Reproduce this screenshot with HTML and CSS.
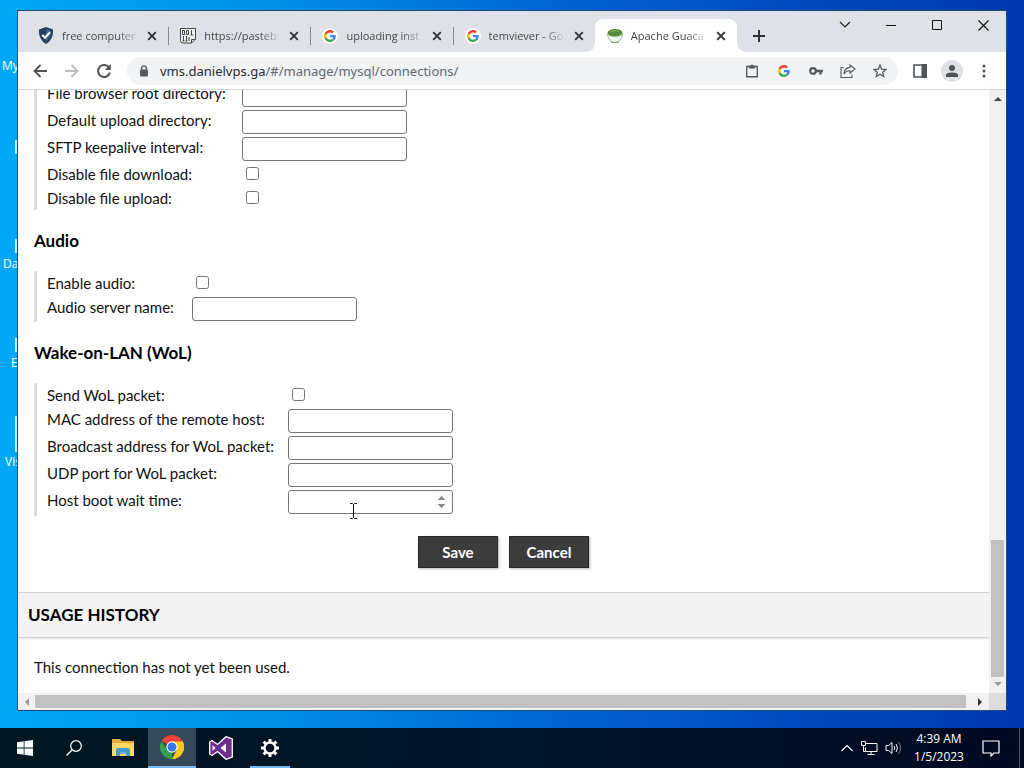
FILE: index.html
```html
<!DOCTYPE html>
<html lang="en">
<head>
<meta charset="utf-8">
<title>Apache Guacamole</title>
<link rel="stylesheet" href="styles.css">
</head>
<body>
<svg class="defs" width="0" height="0" aria-hidden="true">
  <symbol id="x" viewBox="0 0 10 10"><path d="M1.2 1.2 8.8 8.8M8.8 1.2 1.2 8.8" stroke="#303337" stroke-width="1.9" fill="none"/></symbol>
  <symbol id="google" viewBox="0 0 48 48">
    <path fill="#ea4335" d="M24 9.5c3.54 0 6.71 1.22 9.21 3.6l6.85-6.85C35.9 2.38 30.47 0 24 0 14.62 0 6.51 5.38 2.56 13.22l7.98 6.19C12.43 13.72 17.74 9.5 24 9.5z"/>
    <path fill="#4285f4" d="M46.98 24.55c0-1.57-.15-3.09-.38-4.55H24v9.02h12.94c-.58 2.96-2.26 5.48-4.78 7.18l7.73 6c4.51-4.18 7.09-10.36 7.09-17.65z"/>
    <path fill="#fbbc05" d="M10.53 28.59c-.48-1.45-.76-2.99-.76-4.59s.27-3.14.76-4.59l-7.98-6.19C.92 16.46 0 20.12 0 24c0 3.88.92 7.54 2.56 10.78l7.97-6.19z"/>
    <path fill="#34a853" d="M24 48c6.48 0 11.93-2.13 15.89-5.81l-7.73-6c-2.15 1.45-4.92 2.3-8.16 2.3-6.26 0-11.57-4.22-13.47-9.91l-7.98 6.19C6.51 42.62 14.62 48 24 48z"/>
  </symbol>
</svg>
<div class="desktop">
  <ul class="shortcuts">
    <li class="pc">My PC</li><li class="data">Data</li><li class="edge">Edge</li><li class="vis">Visual</li>
  </ul>
  <div class="window">
    <header class="tabstrip">
      <nav class="tabs">
        <div class="tab">
          <svg width="16" height="17" viewBox="0 0 16 17"><path d="M8 0 15 2.5C15.5 9 13 14 8 17 3 14 .5 9 1 2.5z" fill="#24425f"/><path d="M8 2 13 4C13 9 11 12 8 14.500z" fill="#3e668b"/><path d="M4.300 8 7 10.700 12 5.300" fill="none" stroke="#fff" stroke-width="2"/></svg>
          <span class="title">free computer</span>
          <button class="close" aria-label="Close tab"><svg width="10" height="10"><use href="#x"/></svg></button>
        </div>
        <div class="tab">
          <svg width="16" height="17" viewBox="0 0 16 17" fill="none" stroke="#333"><path d="M.5 1.500H15.500V12L11.500 16H3Q.5 16 .5 13.500z" fill="#f4f4f4" stroke-width=".9"/><path d="M11.500 16V12.500H15.500M2.500 3.500h2v4h-2zM6.500 3.500h2v4h-2zM11.500 3v5M10.500 8h3M3.500 9v5M6.500 9v5M2.500 14h2M5.500 14h2M9 10v4" stroke-width=".9"/></svg>
          <span class="title">https://pasteb</span>
          <button class="close" aria-label="Close tab"><svg width="10" height="10"><use href="#x"/></svg></button>
        </div>
        <div class="tab">
          <span class="disc"><svg width="12" height="12"><use href="#google"/></svg></span>
          <span class="title">uploading inst</span>
          <button class="close" aria-label="Close tab"><svg width="10" height="10"><use href="#x"/></svg></button>
        </div>
        <div class="tab last">
          <span class="disc"><svg width="12" height="12"><use href="#google"/></svg></span>
          <span class="title">temviever - Go</span>
          <button class="close" aria-label="Close tab"><svg width="10" height="10"><use href="#x"/></svg></button>
        </div>
        <div class="tab active">
          <svg width="16" height="16" viewBox="0 0 16 16"><path d="M.5 5.500C1 11 3.500 14.500 8 14.500S15 11 15.500 5.500z" fill="#f0f3ee" stroke="#a9b4a9"/><path d="M4 14Q8 15.500 12 14" fill="none" stroke="#6f9a65"/><ellipse cx="8" cy="5" rx="7.500" ry="3.800" fill="#659f42"/><path d="M1 4C4 0 13 0 15 4L13 6Q8 9 2 7z" fill="#4f8b37"/><path d="M3 4q4-2 9-1" stroke="#8dbb5c" fill="none"/></svg>
          <span class="title">Apache Guaca</span>
          <button class="close" aria-label="Close tab"><svg width="10" height="10"><use href="#x"/></svg></button>
        </div>
      </nav>
      <button class="newtab" aria-label="New tab"><svg width="12" height="12" viewBox="0 0 12 12"><path d="M6 0v12M0 6h12" stroke="#303337" stroke-width="2"/></svg></button>
      <div class="controls">
        <button aria-label="Search tabs"><svg width="12" height="8" viewBox="0 0 12 8"><path d="M1 1l5 5 5-5" fill="none" stroke="#222" stroke-width="1.200"/></svg></button>
        <button aria-label="Minimize"><svg width="10" height="10" viewBox="0 0 10 10"><path d="M0 5.500h10" stroke="#111"/></svg></button>
        <button aria-label="Maximize"><svg width="10" height="10" viewBox="0 0 10 10"><path d="M.5.5h9v9h-9z" fill="none" stroke="#111"/></svg></button>
        <button aria-label="Close"><svg width="11" height="11" viewBox="0 0 11 11"><path d="M.5.5l10 10M10.500.5l-10 10" stroke="#111" stroke-width="1.100"/></svg></button>
      </div>
    </header>
    <div class="toolbar">
      <button aria-label="Back"><svg width="14" height="14" viewBox="0 0 14 14"><path d="M14 7H1.500M7.500 1l-6 6 6 6" fill="none" stroke="#505357" stroke-width="1.800"/></svg></button>
      <button aria-label="Forward"><svg width="14" height="14" viewBox="0 0 14 14"><path d="M0 7h12.500M6.500 1l6 6-6 6" fill="none" stroke="#bbbdc0" stroke-width="1.800"/></svg></button>
      <button aria-label="Reload"><svg width="16" height="16" viewBox="0 0 16 16"><path d="M13.300 5A6 6 0 1 0 13.900 9.500" fill="none" stroke="#505357" stroke-width="2"/><path d="M14.800 1v6h-6z" fill="#505357"/></svg></button>
      <div class="omnibox">
        <svg class="lock" width="10" height="12" viewBox="0 0 10 12"><path d="M2.700 5V3.200a2.300 2.300 0 0 1 4.600 0V5" fill="none" stroke="#55585c" stroke-width="1.400"/><rect x="1" y="4.500" width="8" height="7" rx="1" fill="#55585c"/></svg>
        <div class="url"><b>vms.danielvps.ga</b>/#/manage/mysql/connections/</div>
        <button aria-label="Clipboard"><svg width="14" height="14" viewBox="0 0 14 14"><path d="M1.700 2.500h10.600v10.300H1.700z" fill="none" stroke="#55585c" stroke-width="1.400"/><path d="M4 1.500h2a1 1 0 0 1 2 0h2v3H4z" fill="#55585c"/></svg></button>
        <button aria-label="Google"><svg width="12" height="12"><use href="#google"/></svg></button>
        <button aria-label="Passwords"><svg width="14" height="10" viewBox="0 0 14 10"><circle cx="4" cy="5" r="2.800" fill="none" stroke="#55585c" stroke-width="2.200"/><path d="M7 5h7M11.500 5v3.500" stroke="#55585c" stroke-width="2.400"/></svg></button>
        <button aria-label="Share"><svg width="16" height="14" viewBox="0 0 16 14"><path d="M3.500 3.500H1v10h11v-3M10 1l5 4-5 4V6.800Q6 6.500 4 10 4.500 3.800 10 3.400z" fill="none" stroke="#55585c" stroke-width="1.100"/></svg></button>
        <button aria-label="Bookmark"><svg width="14" height="14" viewBox="0 0 14 14"><path d="M7 1.300 8.700 5.100 12.900 5.500 9.700 8.300 10.700 12.500 7 10.200 3.300 12.500 4.300 8.300 1.100 5.500 5.300 5.100z" fill="none" stroke="#55585c" stroke-width="1.300"/></svg></button>
      </div>
      <button aria-label="Side panel"><svg width="14" height="14" viewBox="0 0 14 14"><path d="M1 1h12v12H1z" fill="none" stroke="#505357" stroke-width="1.600"/><path d="M8.500 0H14v14H8.500z" fill="#505357"/></svg></button>
      <button aria-label="Profile"><span class="avatar"><svg width="12" height="12" viewBox="0 0 12 12" fill="#505357"><circle cx="6" cy="3" r="3"/><path d="M0 12V10Q0 7.500 6 7.500T12 10v2z"/></svg></span></button>
      <button aria-label="Menu"><svg width="4" height="14" viewBox="0 0 4 14" fill="#505357"><circle cx="2" cy="2" r="1.500"/><circle cx="2" cy="7" r="1.500"/><circle cx="2" cy="12" r="1.500"/></svg></button>
    </div>
    <div class="frame">
      <main class="page">
        <form class="content">
          <div class="fields sftp">
            <label for="root">File browser root directory:</label><input id="root" type="text">
            <label for="upl">Default upload directory:</label><input id="upl" type="text">
            <label for="keep">SFTP keepalive interval:</label><input id="keep" type="text">
            <label for="dd">Disable file download:</label><input id="dd" type="checkbox">
            <label for="du">Disable file upload:</label><input id="du" type="checkbox">
          </div>
          <h3>Audio</h3>
          <div class="fields audio">
            <label for="ea">Enable audio:</label><input id="ea" type="checkbox">
            <label for="as">Audio server name:</label><input id="as" type="text">
          </div>
          <h3>Wake-on-LAN (WoL)</h3>
          <div class="fields wol">
            <label for="sw">Send WoL packet:</label><input id="sw" type="checkbox">
            <label for="mac">MAC address of the remote host:</label><input id="mac" type="text">
            <label for="bc">Broadcast address for WoL packet:</label><input id="bc" type="text">
            <label for="udp">UDP port for WoL packet:</label><input id="udp" type="text">
            <label for="boot">Host boot wait time:</label><input id="boot" type="number">
          </div>
          <div class="actions"><button type="button">Save</button><button type="button">Cancel</button></div>
        </form>
        <h2>USAGE HISTORY</h2>
        <p class="history">This connection has not yet been used.</p>
      </main>
      <div class="vscroll">
        <svg width="8" height="5" viewBox="0 0 8 5"><path d="M0 5 4 1l4 4z" fill="#444"/></svg>
        <div class="vtrack"><div class="vthumb"></div></div>
        <svg width="8" height="5" viewBox="0 0 8 5"><path d="M0 0l4 4 4-4z" fill="#999"/></svg>
      </div>
      <div class="hscroll">
        <svg width="5" height="8" viewBox="0 0 5 8"><path d="M5 0 1 4l4 4z" fill="#999"/></svg>
        <div class="hthumb"></div>
        <svg width="5" height="8" viewBox="0 0 5 8"><path d="M0 0l4 4-4 4z" fill="#333"/></svg>
      </div>
      <div class="corner"></div>
    </div>
  </div>
  <svg class="cursor" width="9" height="16" viewBox="0 0 9 16"><path d="M1 .5h2.500l1 1 1-1H8M4.500 1v14M1 15.500h2.500l1-1 1 1H8" fill="none" stroke="#111"/></svg>
</div>
<footer class="taskbar">
  <div class="apps">
    <button aria-label="Start"><svg width="16" height="16" viewBox="0 0 16 16" fill="#fff"><path d="M0 2.300 6.700 1.300V7.600H0zM7.500 1.200 16 0V7.600H7.500zM0 8.400H6.700V14.700L0 13.700zM7.500 8.400H16V16L7.500 14.800z"/></svg></button>
    <button aria-label="Search"><svg width="16" height="16" viewBox="0 0 16 16"><circle cx="10" cy="6" r="5.300" fill="none" stroke="#fff" stroke-width="1.200"/><path d="M6.200 9.800.5 15.500" stroke="#fff" stroke-width="1.300"/></svg></button>
    <button aria-label="File Explorer"><svg width="22" height="18" viewBox="0 0 22 18"><path d="M0 0h8l2 2h12v15H0z" fill="#e8ac35"/><path d="M0 4h22v13H0z" fill="#fbd76c"/><path d="M4 17v-6q0-2 2-2h10q2 0 2 2v6h-4v-4H8v4z" fill="#4699ce"/><path d="M8 13h6v2H8z" fill="#69b9e4"/></svg></button>
    <button class="current" aria-label="Chrome"><svg width="24" height="24" viewBox="0 0 24 24"><path d="M12 12 1.600 6A12 12 0 0 1 22.400 6z" fill="#e94435"/><path d="M12 12 22.400 6A12 12 0 0 1 12 24l5-9z" fill="#fbc916"/><path d="M1.600 6 7 15 12 17.500 12 24A12 12 0 0 1 1.600 6z" fill="#33a352"/><path d="M12 6.500h10.600A12 12 0 0 1 12 24l5-9z" fill="#fbc916"/><circle cx="12" cy="12" r="5.700" fill="#fff"/><circle cx="12" cy="12" r="4.500" fill="#3179e6"/></svg></button>
    <button aria-label="Visual Studio"><svg width="24" height="24" viewBox="0 0 24 24"><path d="M17 .7 23.300 3v18L17 23.300 8.500 15.500 3 19.500.7 18V6L3 4.500 8.500 8.500z" fill="#702e8c" stroke="#fff" stroke-width="1.300"/><path d="M17 7.500v9L11.500 12zM3.500 9v6L6.500 12z" fill="#fff"/></svg></button>
    <button class="open" aria-label="Settings"><svg width="18" height="18" viewBox="0 0 18 18" fill="none" stroke="#fff"><circle cx="9" cy="9" r="5.500" stroke-width="2.300"/><path d="M9 0v3M9 15v3M0 9h3M15 9h3M2.600 2.600l2.200 2.200M13.200 13.200l2.200 2.200M15.400 2.600l-2.200 2.200M4.800 13.200l-2.200 2.200" stroke-width="3"/></svg></button>
  </div>
  <div class="tray">
    <svg width="14" height="8" viewBox="0 0 14 8"><path d="M1.500 7 7 1.500 12.500 7" fill="none" stroke="#fff" stroke-width="1.200"/></svg>
    <svg width="17" height="14" viewBox="0 0 17 14" fill="none" stroke="#fff"><path d="M5 2.500h11v8H4.500v-4M10 10.500v3M6.500 13.500h7M.5.500h4v4h-4zM2.500 4.500v6h2"/></svg>
    <svg width="17" height="14" viewBox="0 0 17 14" fill="none" stroke="#fff"><path d="M1 4.500h2.500l3.500-3v11l-3.500-3H1z"/><path d="M9 4.800q1.500 2.200 0 4.400M11 3q3 4 0 8"/><path d="M13.500 1.200q4 5.800 0 11.600" stroke="#76808a"/></svg>
    <time class="clock">4:39 AM<br>1/5/2023</time>
    <svg class="notice" width="18" height="17" viewBox="0 0 18 17"><path d="M1 1h16v12h-5l-3 3v-3H1z" fill="none" stroke="#fff" stroke-width="1.200"/></svg>
  </div>
</footer>
</body>
</html>
```
FILE: styles.css
```css
* { box-sizing: border-box; }
html, body { height: 100%; }
body { margin: 0; display: flex; flex-direction: column; overflow: hidden; font-family: "Open Sans", "Noto Sans", sans-serif; font-size: 12px; }
button { border: 0; padding: 0; background: none; font: inherit; display: flex; align-items: center; justify-content: center; }
svg { display: block; flex: none; }
.defs { position: absolute; }

.desktop { position: relative; flex: 1; min-height: 0; display: flex; padding: 11px 18px 18px; background: linear-gradient(90deg, #00a8f8 0%, #0092ea 25%, #0064d2 55%, #0048bd 80%, #0038b0 100%); }
.shortcuts { list-style: none; margin: 0; padding: 0; color: #fff; }
.shortcuts li { position: absolute; left: 3px; white-space: nowrap; line-height: 16px; }
.shortcuts .pc { top: 58px; left: 2px; }
.shortcuts .data { top: 256px; }
.shortcuts .edge { top: 355px; left: 11px; }
.shortcuts .vis { top: 454px; left: 5px; }
.shortcuts li::before { content: ""; position: absolute; width: 2px; height: 14px; background: #c9efff; }
.shortcuts .pc::before { left: 13px; top: 82px; }
.shortcuts .data::before { left: 12px; top: -17px; }
.shortcuts .edge::before { left: 4px; top: -17px; }
.shortcuts .vis::before { left: 10px; top: -38px; height: 36px; }

.window { position: relative; flex: 1; min-width: 0; display: flex; flex-direction: column; background: #fff; box-shadow: 0 0 0 1px #1b4a72; }
.tabstrip { display: flex; height: 41px; background: #dee1e6; }
.tabs { display: flex; flex: 0 1 719px; min-width: 0; padding: 8px 0 0 8px; }
.tab { flex: 1; min-width: 0; display: flex; align-items: center; padding: 0 11px 0 12px; position: relative; color: #45484c; }
.tab:not(.active):not(.last)::after { content: ""; position: absolute; right: -1px; top: 8px; width: 1px; height: 18px; background: #85898e; }
.tab.active { background: #fff; border-radius: 8px 8px 0 0; }
.tab.active::before, .tab.active::after { content: ""; position: absolute; bottom: 0; width: 8px; height: 8px; }
.tab.active::before { left: -8px; background: radial-gradient(circle at 0 0, #dee1e6 7px, #fff 8px); }
.tab.active::after { right: -8px; background: radial-gradient(circle at 100% 0, #dee1e6 7px, #fff 8px); }
.title { flex: 1; min-width: 0; overflow: hidden; white-space: nowrap; margin: 0 4px 0 8px; font-size: 11px; line-height: 20px; mask-image: linear-gradient(90deg, #000 68%, transparent 96%); }
.disc { width: 16px; height: 16px; border-radius: 8px; background: #fff; display: flex; align-items: center; justify-content: center; }
.newtab { width: 28px; margin: 8px 0 0 8px; }
.controls { margin-left: auto; display: flex; height: 28px; }
.controls button { width: 46px; }

.toolbar { display: flex; align-items: center; height: 38px; padding: 0 6px; border-bottom: 1px solid #d5d7da; }
.toolbar button { width: 32px; height: 28px; }
.omnibox { flex: 1; min-width: 0; display: flex; align-items: center; height: 28px; margin: 0 6px 0 7px; padding: 0 2px 0 12px; border-radius: 14px; background: #f1f3f4; }
.url { flex: 1; min-width: 0; margin-left: 11px; overflow: hidden; white-space: nowrap; font-family: "Noto Sans", sans-serif; font-size: 13px; line-height: 20px; color: #63676b; }
.url b { font-weight: 400; color: #292b2e; }
.avatar { width: 22px; height: 22px; border-radius: 11px; background: #dee1e6; display: flex; align-items: center; justify-content: center; }

.frame { flex: 1; min-height: 0; display: grid; grid-template: minmax(0, 1fr) 17px / minmax(0, 1fr) 17px; }
.page { display: flex; flex-direction: column; justify-content: flex-end; overflow: hidden; font-family: Lato, sans-serif; font-size: 15px; color: #111; }
.content { padding: 0 16px; }
.fields { display: grid; grid-auto-rows: minmax(24px, auto); align-items: start; border-left: 3px solid #ddd; padding-left: 10px; line-height: 24px; }
.sftp { grid-template-columns: 195px 1fr; }
.audio { grid-template-columns: 145px 1fr; }
.wol { grid-template-columns: 241px 1fr; padding-bottom: 1px; }
.fields input[type="text"], .fields input[type="number"] { width: 165px; height: 24px; margin: 2px 0 1px; padding: 0 3px 0 6px; border: 1px solid #767676; border-radius: 3px; background: #fff; }
.fields input[type="checkbox"] { width: 13px; height: 13px; margin: 5px 4px; }
.fields input::-webkit-inner-spin-button { opacity: 1; }
h3 { margin: 0; padding: 19px 0 18px; font-size: 17px; line-height: 24px; font-weight: 700; color: #000; }
.actions { display: flex; justify-content: center; gap: 11px; padding: 20px 0 24px; }
.actions button { width: 80px; height: 32px; background: #3c3c3c; border: 1px solid #292929; box-shadow: 1px 1px 2px rgba(0, 0, 0, .3); color: #fff; font-weight: 700; }
h2 { margin: 0; padding: 10px; border-top: 1px solid #d3d3d3; border-bottom: 1px solid #d3d3d3; background: #f3f3f3; box-shadow: 0 1px 2px rgba(0, 0, 0, .12); font-size: 17px; line-height: 24px; font-weight: 700; color: #000; }
.history { margin: 0; padding: 17px 16px 14px; line-height: 24px; }
.vscroll { display: flex; flex-direction: column; align-items: center; padding: 6px 0; background: #f1f1f1; }
.vtrack { flex: 1; display: flex; flex-direction: column; justify-content: flex-end; padding: 6px 0 5px; }
.vthumb { width: 13px; height: 24%; background: #c1c1c1; }
.hscroll { display: flex; align-items: center; gap: 6px; padding: 0 6px; background: #f1f1f1; }
.hthumb { flex: 1; height: 13px; margin-right: 6px; background: #c1c1c1; }
.corner { background: #dcdcdc; }
.cursor { position: absolute; left: 349px; top: 503px; }

.taskbar { height: 40px; display: flex; justify-content: space-between; background: linear-gradient(90deg, #001620, #00142a 50%, #000a20 100%); color: #fff; }
.apps { display: flex; gap: 1px; padding-left: 1px; }
.apps button { width: 48px; }
.apps .current { background: #34495a; border-bottom: 2px solid #76b9ed; }
.apps .open { background: linear-gradient(#76b9ed, #76b9ed) 50% 100% / 40px 2px no-repeat; }
.tray { display: flex; align-items: center; gap: 7px; padding-right: 4px; }
.clock { width: 60px; text-align: center; line-height: 18px; white-space: nowrap; }
.notice { margin: 0 19px 0 6px; }
.tray::after { content: ""; width: 1px; height: 40px; margin-left: -7px; background: #4b5564; }
```
